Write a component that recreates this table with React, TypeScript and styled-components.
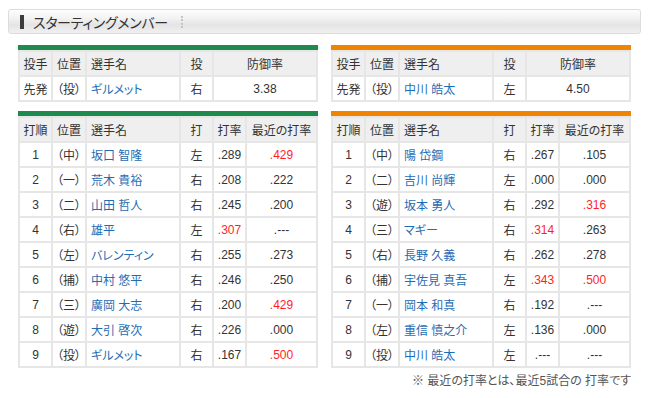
import React from "react";
import styled, { createGlobalStyle } from "styled-components";

const Global = createGlobalStyle`
  html, body { margin: 0; padding: 0; background: #ffffff; }
  body {
    font-family: "Liberation Sans", "Noto Sans CJK JP", sans-serif;
    font-size: 12px;
    color: #333333;
    font-feature-settings: "palt";
  }
`;

const Page = styled.div`
  width: 650px;
  height: 398px;
  padding: 9px 0 0 8px;
  box-sizing: border-box;
`;

const TitleBar = styled.div`
  width: 633px;
  height: 25px;
  box-sizing: border-box;
  border: 1px solid #dcdcdc;
  border-radius: 3px;
  background: linear-gradient(#fdfdfd 0%, #f3f3f3 35%, #e4e4e4 65%, #f0f0f0 100%);
  display: flex;
  align-items: center;
  padding-left: 11px;
  gap: 9px;
`;

const Marker = styled.span`
  width: 4px;
  height: 14px;
  background: #3c3c3c;
`;

const Title = styled.h2`
  margin: 0;
  font-size: 14px;
  font-weight: normal;
  color: #333333;
  letter-spacing: -0.3px;
`;

const Dots = styled.span`
  width: 0;
  height: 12px;
  border-left: 2px dotted #c4c4c4;
  margin-left: 4px;
`;

const Columns = styled.div`
  display: grid;
  grid-template-columns: 300px 300px;
  column-gap: 13px;
  margin: 11px 0 0 10px;
`;

const Column = styled.div`
  display: flex;
  flex-direction: column;
  gap: 9px;
`;

const Card = styled.div<{ $accent: string }>`
  border-top: 5px solid ${(p) => p.$accent};
`;

const Table = styled.table`
  width: 100%;
  border-collapse: collapse;
  table-layout: fixed;
`;

const Th = styled.th<{ $left?: boolean }>`
  height: 23px;
  padding: ${(p) => (p.$left ? "0 0 0 4px" : "0")};
  background: #efefef;
  border: 2px solid #e6e6e6;
  font-weight: normal;
  text-align: ${(p) => (p.$left ? "left" : "center")};
  white-space: nowrap;
  color: #333333;
`;

const Td = styled.td<{ $left?: boolean; $red?: boolean; $blue?: boolean }>`
  height: 23px;
  padding: ${(p) => (p.$left ? "0 0 0 4px" : "0")};
  background: #ffffff;
  border: 2px solid #e6e6e6;
  text-align: ${(p) => (p.$left ? "left" : "center")};
  white-space: nowrap;
  color: ${(p) => (p.$red ? "#ff1f1f" : p.$blue ? "#1f6db3" : "#333333")};
`;

const Note = styled.p`
  margin: 3px 0 0;
  width: 623px;
  text-align: right;
  font-size: 12px;
  color: #555555;
`;

type Pitcher = { name: string; hand: string; era: string };
type Batter = { pos: string; name: string; hand: string; avg: string; recent: string };

const GREEN = "#1f8a4d";
const ORANGE = "#f08300";

const isRed = (v: string) => {
  const n = parseFloat(v);
  return !isNaN(n) && n >= 0.3;
};

const PitcherTable = ({ accent, p }: { accent: string; p: Pitcher }) => (
  <Card $accent={accent}>
    <Table>
      <colgroup>
        <col style={{ width: 33 }} />
        <col style={{ width: 34 }} />
        <col style={{ width: 94 }} />
        <col style={{ width: 33 }} />
        <col />
      </colgroup>
      <thead>
        <tr>
          <Th>投手</Th>
          <Th>位置</Th>
          <Th $left>選手名</Th>
          <Th>投</Th>
          <Th>防御率</Th>
        </tr>
      </thead>
      <tbody>
        <tr>
          <Td>先発</Td>
          <Td>（投）</Td>
          <Td $left $blue>{p.name}</Td>
          <Td>{p.hand}</Td>
          <Td>{p.era}</Td>
        </tr>
      </tbody>
    </Table>
  </Card>
);

const BattingTable = ({ accent, rows }: { accent: string; rows: Batter[] }) => (
  <Card $accent={accent}>
    <Table>
      <colgroup>
        <col style={{ width: 33 }} />
        <col style={{ width: 34 }} />
        <col style={{ width: 94 }} />
        <col style={{ width: 33 }} />
        <col style={{ width: 33 }} />
        <col />
      </colgroup>
      <thead>
        <tr>
          <Th>打順</Th>
          <Th>位置</Th>
          <Th $left>選手名</Th>
          <Th>打</Th>
          <Th>打率</Th>
          <Th>最近の打率</Th>
        </tr>
      </thead>
      <tbody>
        {rows.map((r, i) => (
          <tr key={i}>
            <Td>{i + 1}</Td>
            <Td>{r.pos}</Td>
            <Td $left $blue>{r.name}</Td>
            <Td>{r.hand}</Td>
            <Td $red={isRed(r.avg)}>{r.avg}</Td>
            <Td $red={isRed(r.recent)}>{r.recent}</Td>
          </tr>
        ))}
      </tbody>
    </Table>
  </Card>
);

const left: Batter[] = [
  { pos: "（中）", name: "坂口 智隆", hand: "左", avg: ".289", recent: ".429" },
  { pos: "（一）", name: "荒木 貴裕", hand: "右", avg: ".208", recent: ".222" },
  { pos: "（二）", name: "山田 哲人", hand: "右", avg: ".245", recent: ".200" },
  { pos: "（右）", name: "雄平", hand: "左", avg: ".307", recent: ".---" },
  { pos: "（左）", name: "バレンティン", hand: "右", avg: ".255", recent: ".273" },
  { pos: "（捕）", name: "中村 悠平", hand: "右", avg: ".246", recent: ".250" },
  { pos: "（三）", name: "廣岡 大志", hand: "右", avg: ".200", recent: ".429" },
  { pos: "（遊）", name: "大引 啓次", hand: "右", avg: ".226", recent: ".000" },
  { pos: "（投）", name: "ギルメット", hand: "右", avg: ".167", recent: ".500" },
];

const right: Batter[] = [
  { pos: "（中）", name: "陽 岱鋼", hand: "右", avg: ".267", recent: ".105" },
  { pos: "（二）", name: "吉川 尚輝", hand: "左", avg: ".000", recent: ".000" },
  { pos: "（遊）", name: "坂本 勇人", hand: "右", avg: ".292", recent: ".316" },
  { pos: "（三）", name: "マギー", hand: "右", avg: ".314", recent: ".263" },
  { pos: "（右）", name: "長野 久義", hand: "右", avg: ".262", recent: ".278" },
  { pos: "（捕）", name: "宇佐見 真吾", hand: "左", avg: ".343", recent: ".500" },
  { pos: "（一）", name: "岡本 和真", hand: "右", avg: ".192", recent: ".---" },
  { pos: "（左）", name: "重信 慎之介", hand: "左", avg: ".136", recent: ".000" },
  { pos: "（投）", name: "中川 皓太", hand: "左", avg: ".---", recent: ".---" },
];

export default function App() {
  return (
    <Page>
      <Global />
      <TitleBar>
        <Marker />
        <Title>スターティングメンバー</Title>
        <Dots />
      </TitleBar>
      <Columns>
        <Column>
          <PitcherTable accent={GREEN} p={{ name: "ギルメット", hand: "右", era: "3.38" }} />
          <BattingTable accent={GREEN} rows={left} />
        </Column>
        <Column>
          <PitcherTable accent={ORANGE} p={{ name: "中川 皓太", hand: "左", era: "4.50" }} />
          <BattingTable accent={ORANGE} rows={right} />
        </Column>
      </Columns>
      <Note>※ 最近の打率とは、最近5試合の 打率です</Note>
    </Page>
  );
}
